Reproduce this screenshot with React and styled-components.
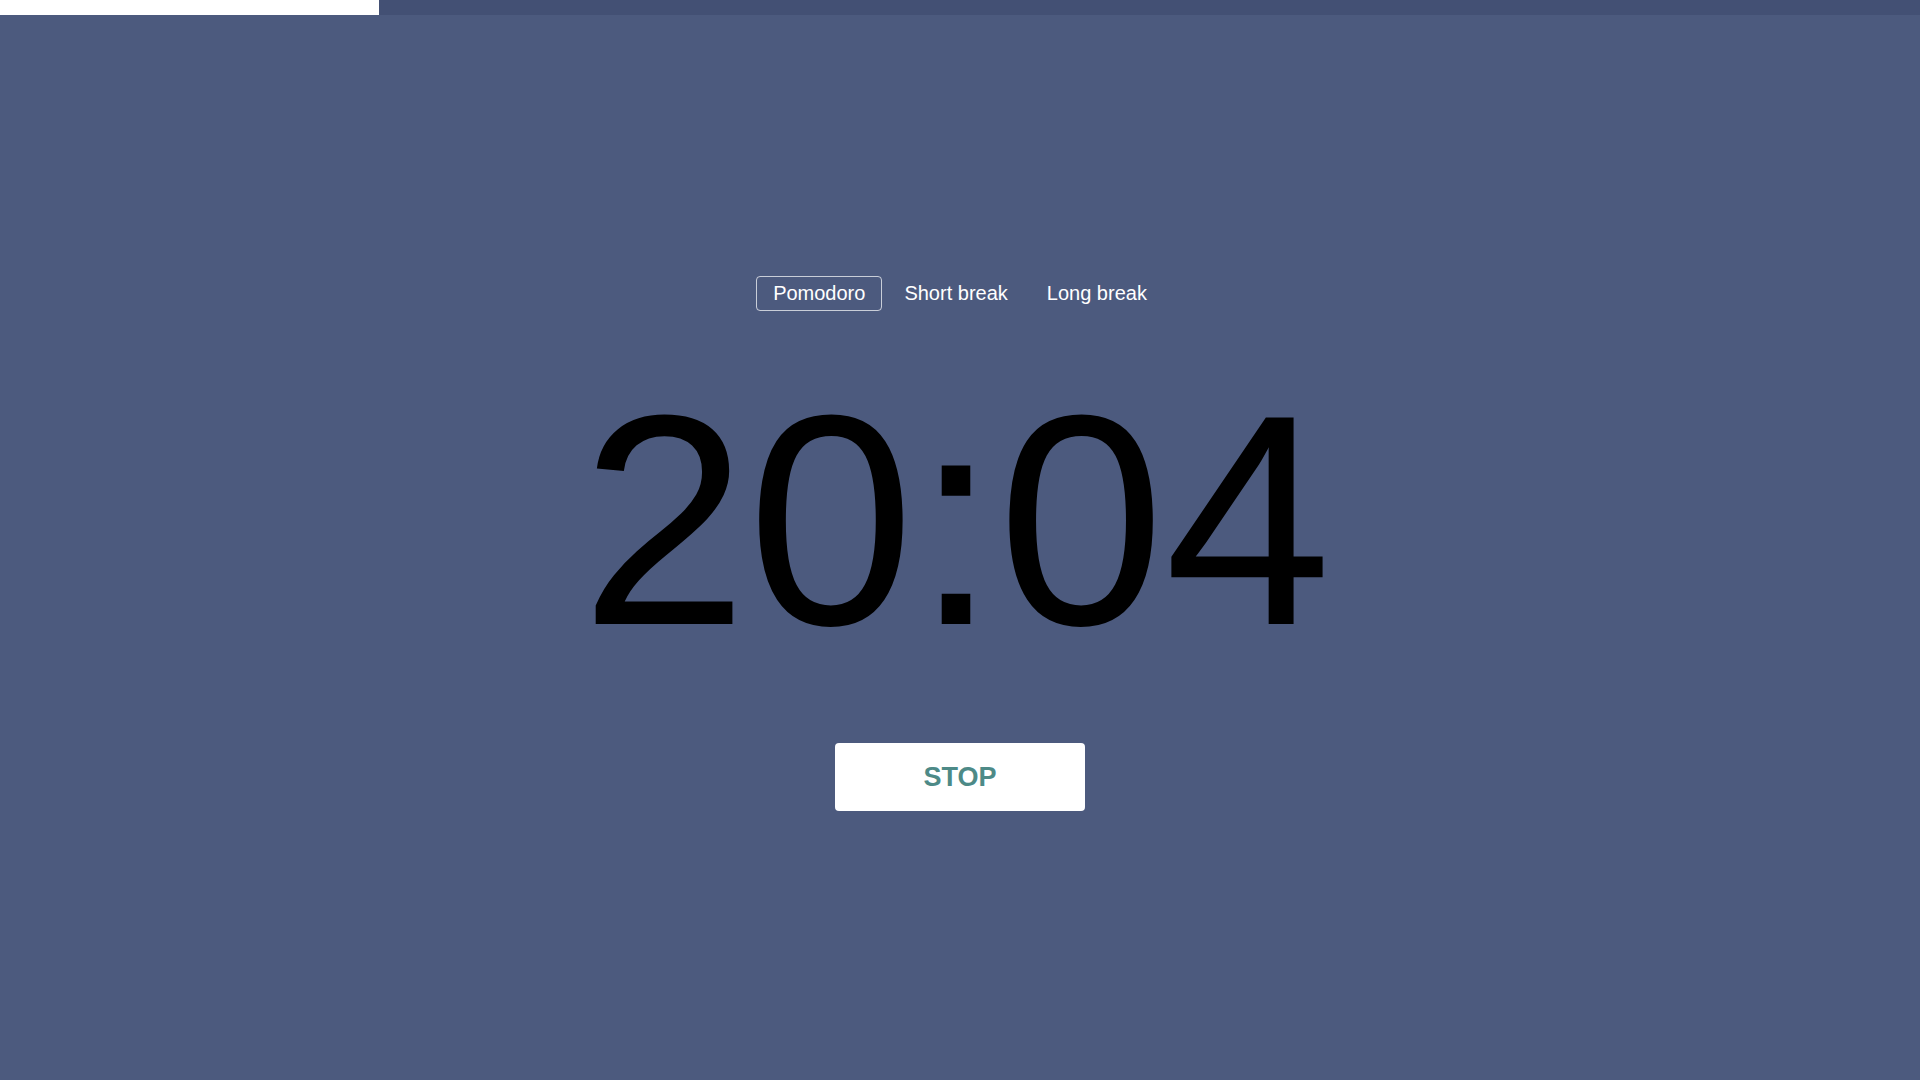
import React, { useState } from 'react';
import styled, { createGlobalStyle } from 'styled-components';

const GlobalStyle = createGlobalStyle`
  * {
    box-sizing: border-box;
  }

  html, body {
    margin: 0;
    padding: 0;
    background-color: #4c5a7e;
    font-family: "Liberation Sans", Arial, sans-serif;
  }
`;

const Page = styled.div`
  display: flex;
  flex-direction: column;
  min-height: 100vh;
  background-color: #4c5a7e;
`;

const ProgressTrack = styled.div`
  width: 100%;
  height: 15px;
  background-color: #435074;
`;

const ProgressFill = styled.div`
  height: 100%;
  background-color: #fff;
`;

const Main = styled.main`
  display: flex;
  flex-direction: column;
  align-items: center;
  padding-top: 261px;
`;

const Tabs = styled.div`
  display: flex;
  gap: 5px;
`;

const Tab = styled.button`
  padding: 5px 16px;
  font-family: inherit;
  font-size: 20px;
  line-height: 23px;
  color: #fff;
  background: transparent;
  border: 1px solid ${(props) => (props.$active ? 'rgba(255, 255, 255, 0.7)' : 'transparent')};
  border-radius: 4px;
  cursor: pointer;
`;

const Timer = styled.div`
  margin-top: 59px;
  margin-right: 8px;
  font-size: 300px;
  line-height: 300px;
  color: #000;
`;

const ActionButton = styled.button`
  margin-top: 73px;
  width: 250px;
  height: 68px;
  font-family: inherit;
  font-size: 27px;
  font-weight: 700;
  color: #4d8a87;
  background-color: #fff;
  border: none;
  border-radius: 4px;
  cursor: pointer;
`;

const modes = ['Pomodoro', 'Short break', 'Long break'];

export default function App() {
  const [mode, setMode] = useState('Pomodoro');
  const progress = 379 / 1920;

  return (
    <Page>
      <GlobalStyle />
      <ProgressTrack>
        <ProgressFill style={{ width: `${progress * 100}%` }} />
      </ProgressTrack>
      <Main>
        <Tabs>
          {modes.map((m) => (
            <Tab key={m} $active={mode === m} onClick={() => setMode(m)}>
              {m}
            </Tab>
          ))}
        </Tabs>
        <Timer>20:04</Timer>
        <ActionButton>STOP</ActionButton>
      </Main>
    </Page>
  );
}
